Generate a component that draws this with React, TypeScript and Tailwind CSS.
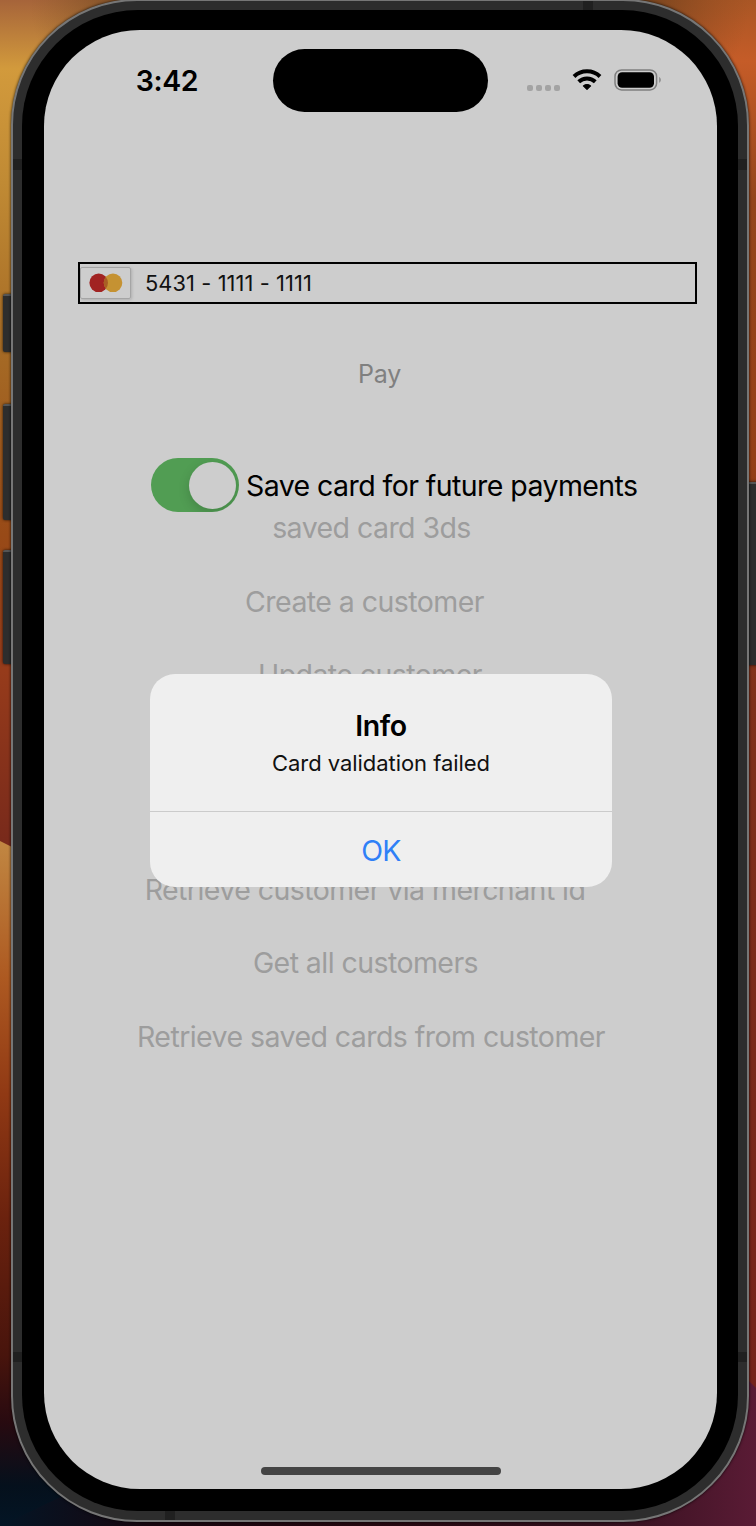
import type { ReactNode } from "react";

function StatusBar() {
  return (
    <div className="flex h-[100px] items-start">
      <div className="ml-[73px] mt-[33px] flex h-9 w-[100px] items-center justify-center text-[28.5px] font-semibold tracking-[-0.4px] text-black">
        3:42
      </div>
      <div className="ml-[56px] mt-[19px] h-[63px] w-[215px] rounded-full bg-black" />
      <div className="ml-[39px] mt-[55px] flex gap-[3px]">
        <span className="size-[6px] rounded-[2px] bg-[#a3a3a3]" />
        <span className="size-[6px] rounded-[2px] bg-[#a3a3a3]" />
        <span className="size-[6px] rounded-[2px] bg-[#a3a3a3]" />
        <span className="size-[6px] rounded-[2px] bg-[#a3a3a3]" />
      </div>
      <svg className="ml-[12px] mt-[39px]" width="30" height="22" viewBox="0 0 30 22" fill="none">
        <path d="M2 7.5 C9.2 .6 20.8 .6 28 7.5" stroke="#000" strokeWidth="4" strokeLinejoin="round" />
        <path d="M6.7 12.7 C11.4 8.3 18.6 8.3 23.3 12.7" stroke="#000" strokeWidth="4" />
        <path d="M11.4 16.9 Q15 14.3 18.6 16.9 L15 20.4 Z" fill="#000" stroke="#000" strokeWidth="1.2" strokeLinejoin="round" />
      </svg>
      <svg className="ml-[11px] mt-[38px]" width="49" height="24" viewBox="0 0 49 24" fill="none">
        <rect x="2" y="1.9" width="41.6" height="20" rx="6.6" stroke="#7f7f7f" strokeWidth="1.5" />
        <rect x="4.6" y="4.2" width="36.4" height="15.6" rx="4.5" fill="#000" />
        <path d="M46.3 8.8 Q49.2 11.9 46.3 15 Z" fill="#7f7f7f" />
      </svg>
    </div>
  );
}

function CardField() {
  return (
    <div className="ml-[34px] mt-[132px] flex h-[42px] w-[619px] items-center border-2 border-black">
      <div className="flex h-[32px] w-[51px] items-center justify-center rounded-[2px] border border-[#a5a5a5] shadow-[1px_1px_3px_rgba(0,0,0,0.15)]">
        <svg width="34" height="20" viewBox="0 0 34 20">
          <circle cx="9.7" cy="9.8" r="9.3" fill="#a12322" />
          <circle cx="24" cy="9.8" r="9.3" fill="#c59232" />
          <path d="M16.85 3.9 A9.3 9.3 0 0 1 16.85 15.7 A9.3 9.3 0 0 1 16.85 3.9" fill="#a95e24" />
        </svg>
      </div>
      <span className="ml-[14px] whitespace-nowrap pt-px text-[21.8px] tracking-[0.1px] text-[#111]">5431 - 1111 - 1111</span>
    </div>
  );
}

function Toggle() {
  return (
    <div className="flex h-[54px] w-[88px] items-center justify-end overflow-hidden rounded-full bg-[#519d53] pr-[3px]">
      <div className="size-[47px] rounded-full bg-[#cdcdcd] shadow-[0_4px_12px_rgba(0,0,0,0.16)]" />
    </div>
  );
}

function Action({ place, children }: { place: string; children: ReactNode }) {
  return (
    <div className={"flex h-[73.5px] items-center justify-center whitespace-nowrap text-[28.5px] tracking-[-0.56px] text-[#9d9d9d] " + place}>
      {children}
    </div>
  );
}

function Alert() {
  return (
    <div className="absolute left-[106px] top-[644px] flex h-[213px] w-[462px] flex-col overflow-hidden rounded-[25px] bg-[#efefef] text-center">
      <div className="h-[137px] pt-[33px]">
        <div className="h-[38px] text-[28.5px] font-semibold leading-[38px] tracking-[-0.4px] text-black">Info</div>
        <div className="h-[34px] text-[22px] leading-[36px] tracking-[-0.05px] text-[#111]">Card validation failed</div>
      </div>
      <div className="flex flex-1 items-center justify-center border-t border-[#cbcbcb] pt-[4px] text-[28.5px] tracking-[-0.7px] text-[#2f80f7]">
        OK
      </div>
    </div>
  );
}

function SideButton({ place }: { place: string }) {
  return (
    <div className={"absolute border-t-2 border-t-[#555] bg-[#2d2d2d] shadow-[0_0_3px_rgba(0,0,0,0.8)] " + place} />
  );
}

export default function App() {
  return (
    <div className="relative flex h-[1526px] w-[756px] overflow-hidden bg-[#22090e] font-['Inter',sans-serif]">
      <svg className="absolute left-0 top-0" width="756" height="1526">
        <defs>
          <linearGradient id="left" x1="0" y1="0" x2="0" y2="1">
            <stop offset="0" stopColor="#a6643a" />
            <stop offset="0.045" stopColor="#d29a3c" />
            <stop offset="0.12" stopColor="#c08a34" />
            <stop offset="0.23" stopColor="#a56a25" />
            <stop offset="0.35" stopColor="#984a17" />
            <stop offset="0.44" stopColor="#963b1b" />
            <stop offset="0.55" stopColor="#792a1b" />
          </linearGradient>
          <linearGradient id="hill" x1="0" y1="0" x2="0" y2="1">
            <stop offset="0" stopColor="#c18742" />
            <stop offset="0.2" stopColor="#ad5921" />
            <stop offset="0.37" stopColor="#903914" />
            <stop offset="0.55" stopColor="#6b220e" />
            <stop offset="0.75" stopColor="#48140c" />
            <stop offset="0.85" stopColor="#270a10" />
            <stop offset="0.94" stopColor="#05101c" />
            <stop offset="1" stopColor="#031525" />
          </linearGradient>
          <linearGradient id="right" x1="0" y1="0" x2="0" y2="1">
            <stop offset="0" stopColor="#a95625" />
            <stop offset="0.04" stopColor="#c55c28" />
            <stop offset="0.13" stopColor="#94451c" />
            <stop offset="0.3" stopColor="#953f18" />
            <stop offset="0.46" stopColor="#7f301b" />
            <stop offset="1" stopColor="#73201b" />
          </linearGradient>
          <radialGradient id="shadeLeft" gradientUnits="userSpaceOnUse" cx="150" cy="0" r="120">
            <stop offset="0" stopColor="#6a431d" />
            <stop offset="1" stopColor="#8a5a26" stopOpacity="0" />
          </radialGradient>
          <radialGradient id="shadeRight" gradientUnits="userSpaceOnUse" cx="630" cy="0" r="120">
            <stop offset="0" stopColor="#6a401d" />
            <stop offset="1" stopColor="#8a4a20" stopOpacity="0" />
          </radialGradient>
          <linearGradient id="dusk" x1="0" y1="0" x2="1" y2="0">
            <stop offset="0" stopColor="#031525" />
            <stop offset="0.2" stopColor="#18060f" />
            <stop offset="0.5" stopColor="#260810" />
            <stop offset="0.8" stopColor="#33101d" />
            <stop offset="1" stopColor="#5a1b35" />
          </linearGradient>
        </defs>
        <rect width="378" height="1526" fill="url(#left)" />
        <rect x="378" width="378" height="1526" fill="url(#right)" />
        <rect width="378" height="130" fill="url(#shadeLeft)" />
        <rect x="378" width="378" height="130" fill="url(#shadeRight)" />
        <path d="M0 841 L16 849 H150 V1526 H0 Z" fill="url(#hill)" />
        <path d="M0 1526 L75 1490 H600 L740 1372 L756 1388 V1526 Z" fill="url(#dusk)" />
      </svg>

      <SideButton place="left-[3px] top-[294px] h-[58px] w-[12px] rounded-l-[2px]" />
      <SideButton place="left-[3px] top-[404px] h-[116px] w-[12px] rounded-l-[2px]" />
      <SideButton place="left-[3px] top-[550px] h-[114px] w-[12px] rounded-l-[2px]" />
      <SideButton place="left-[744px] top-[482px] h-[183px] w-[16px]" />

      <div className="relative -mt-px ml-[11px] h-[1523px] w-[738px] shrink-0 rounded-[126px] border-2 border-[#767676] bg-[#2d2d2d] p-[9px] shadow-[0_0_3px_rgba(0,0,0,0.9)]">
        <span className="absolute left-0 top-[158px] h-[11px] w-[9px] bg-[#202020]" />
        <span className="absolute right-0 top-[158px] h-[11px] w-[9px] bg-[#202020]" />
        <span className="absolute left-0 top-[1351px] h-[10px] w-[9px] bg-[#202020]" />
        <span className="absolute right-0 top-[1351px] h-[10px] w-[9px] bg-[#202020]" />
        <span className="absolute left-[570px] top-0 h-[9px] w-[10px] bg-[#202020]" />
        <span className="absolute bottom-0 left-[152px] h-[9px] w-[10px] bg-[#202020]" />

        <div className="h-[1501px] w-[716px] rounded-[116px] bg-black pl-[22px] pt-[20px]">
          <div className="relative flex h-[1459px] w-[673px] flex-col overflow-hidden rounded-[96px] bg-[#cdcdcd]">
            <StatusBar />
            <CardField />
            <div className="mt-[51px] flex h-[40px] w-[671px] items-center justify-center text-[25px] tracking-[-0.3px] text-[#808080]">Pay</div>
            <div className="ml-[107px] mt-[63px] flex h-[54px] items-center">
              <Toggle />
              <span className="ml-[7px] whitespace-nowrap pt-[2px] text-[28.5px] tracking-[-0.57px] text-black">Save card for future payments</span>
            </div>
            <div className="-mt-[20px] flex flex-col">
              <Action place="w-[655px]">saved card 3ds</Action>
              <Action place="w-[641px]">Create a customer</Action>
              <Action place="w-[652px]">Update customer</Action>
              <Action place="mt-[141px] w-[642px]">Retrieve customer via merchant id</Action>
              <Action place="w-[643px]">Get all customers</Action>
              <Action place="w-[654px]">Retrieve saved cards from customer</Action>
            </div>
            <Alert />
            <div className="mx-auto mb-[14px] mt-auto h-[8px] w-[240px] rounded-full bg-[#444]" />
          </div>
        </div>
      </div>
    </div>
  );
}
